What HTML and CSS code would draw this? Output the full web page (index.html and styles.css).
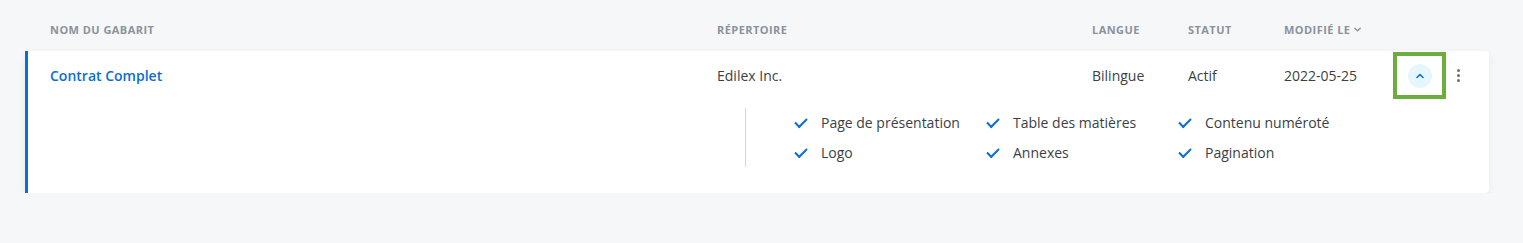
FILE: index.html
```html
<!DOCTYPE html>
<html lang="fr">
<head>
    <meta charset="UTF-8">
    <title>Gabarits</title>
    <link rel="stylesheet" href="styles.css">
</head>
<body>
    <div class="list">
        <!-- Column headers -->
        <div class="cols head">
            <div>Nom du gabarit</div>
            <div>Répertoire</div>
            <div>Langue</div>
            <div>Statut</div>
            <div class="sort">Modifié le
                <svg width="9" height="9" viewBox="0 0 10 10"><path d="M2 3.5 L5 6.5 L8 3.5" fill="none" stroke="#8a929c" stroke-width="1.6" stroke-linecap="round" stroke-linejoin="round"/></svg>
            </div>
        </div>

        <!-- Template card -->
        <div class="card">
            <div class="cols row">
                <div class="name">Contrat Complet</div>
                <div>Edilex Inc.</div>
                <div>Bilingue</div>
                <div>Actif</div>
                <div>2022-05-25</div>
                <div class="toggle-box">
                    <button class="toggle">
                        <svg width="10" height="10" viewBox="0 0 10 10"><path d="M2 6.5 L5 3.5 L8 6.5" fill="none" stroke="#0a6ed1" stroke-width="1.6" stroke-linecap="round" stroke-linejoin="round"/></svg>
                    </button>
                </div>
                <div class="more">
                    <span></span><span></span><span></span>
                </div>
            </div>

            <div class="details">
                <ul class="features">
                    <li>Page de présentation</li>
                    <li>Table des matières</li>
                    <li>Contenu numéroté</li>
                    <li>Logo</li>
                    <li>Annexes</li>
                    <li>Pagination</li>
                </ul>
            </div>
        </div>
    </div>
</body>
</html>
```

FILE: styles.css
```css
/* Global */
body {
    margin: 0;
    background: #f6f7f9;
    font-family: 'Open Sans', 'Noto Sans', sans-serif;
    color: #3a3f45;
}
.list {
    padding: 0 34px 0 25px;
}

/* Shared column grid */
.cols {
    display: grid;
    grid-template-columns: 667px 375px 96px 96px 109px 53px 1fr;
    align-items: center;
    padding-left: 25px;
}

/* Header */
.head {
    height: 51px;
    padding-top: 7px;
    box-sizing: border-box;
    font-size: 11px;
    font-weight: 700;
    text-transform: uppercase;
    color: #8a929c;
    letter-spacing: 0.45px;
}
.sort {
    display: flex;
    align-items: center;
    gap: 3px;
}

/* Card */
.card {
    background: #fff;
    border-left: 3px solid #0a6ed1;
    border-radius: 0 4px 4px 0;
    box-shadow: 0 3px 10px rgba(30, 40, 60, 0.06);
    padding-bottom: 26px;
}
.card .cols {
    padding-left: 22px;
}
.row {
    height: 47px;
    font-size: 14px;
    padding-top: 1px;
}
.name {
    color: #0a6ed1;
    font-weight: 600;
}
.toggle-box {
    height: 47px;
    border: 4px solid #6bae3d;
    box-sizing: border-box;
    display: flex;
    align-items: center;
    justify-content: center;
}
.toggle {
    width: 24px;
    height: 24px;
    border: none;
    border-radius: 50%;
    background: #e6f6fd;
    padding: 0;
    display: flex;
    align-items: center;
    justify-content: center;
}
.more {
    display: flex;
    flex-direction: column;
    gap: 2px;
    padding-left: 11px;
}
.more span {
    width: 3px;
    height: 3px;
    border-radius: 50%;
    background: #6b7179;
}

/* Expanded details */
.details {
    margin-left: calc(717px - 25px - 3px + 28px);
    margin-top: 9px;
    border-left: 1px solid #d3d7dc;
    padding-left: 48px;
}
.features {
    list-style: none;
    margin: 0;
    padding: 5px 0 4px;
    display: grid;
    grid-template-columns: repeat(3, 192px);
    row-gap: 10px;
    font-size: 14px;
    line-height: 20px;
}
.features li {
    display: flex;
    align-items: center;
}
.features li::before {
    content: "";
    width: 10px;
    height: 5px;
    border-left: 2px solid #0a6ed1;
    border-bottom: 2px solid #0a6ed1;
    transform: rotate(-45deg);
    margin: -3px 14px 0 1px;
}
```
